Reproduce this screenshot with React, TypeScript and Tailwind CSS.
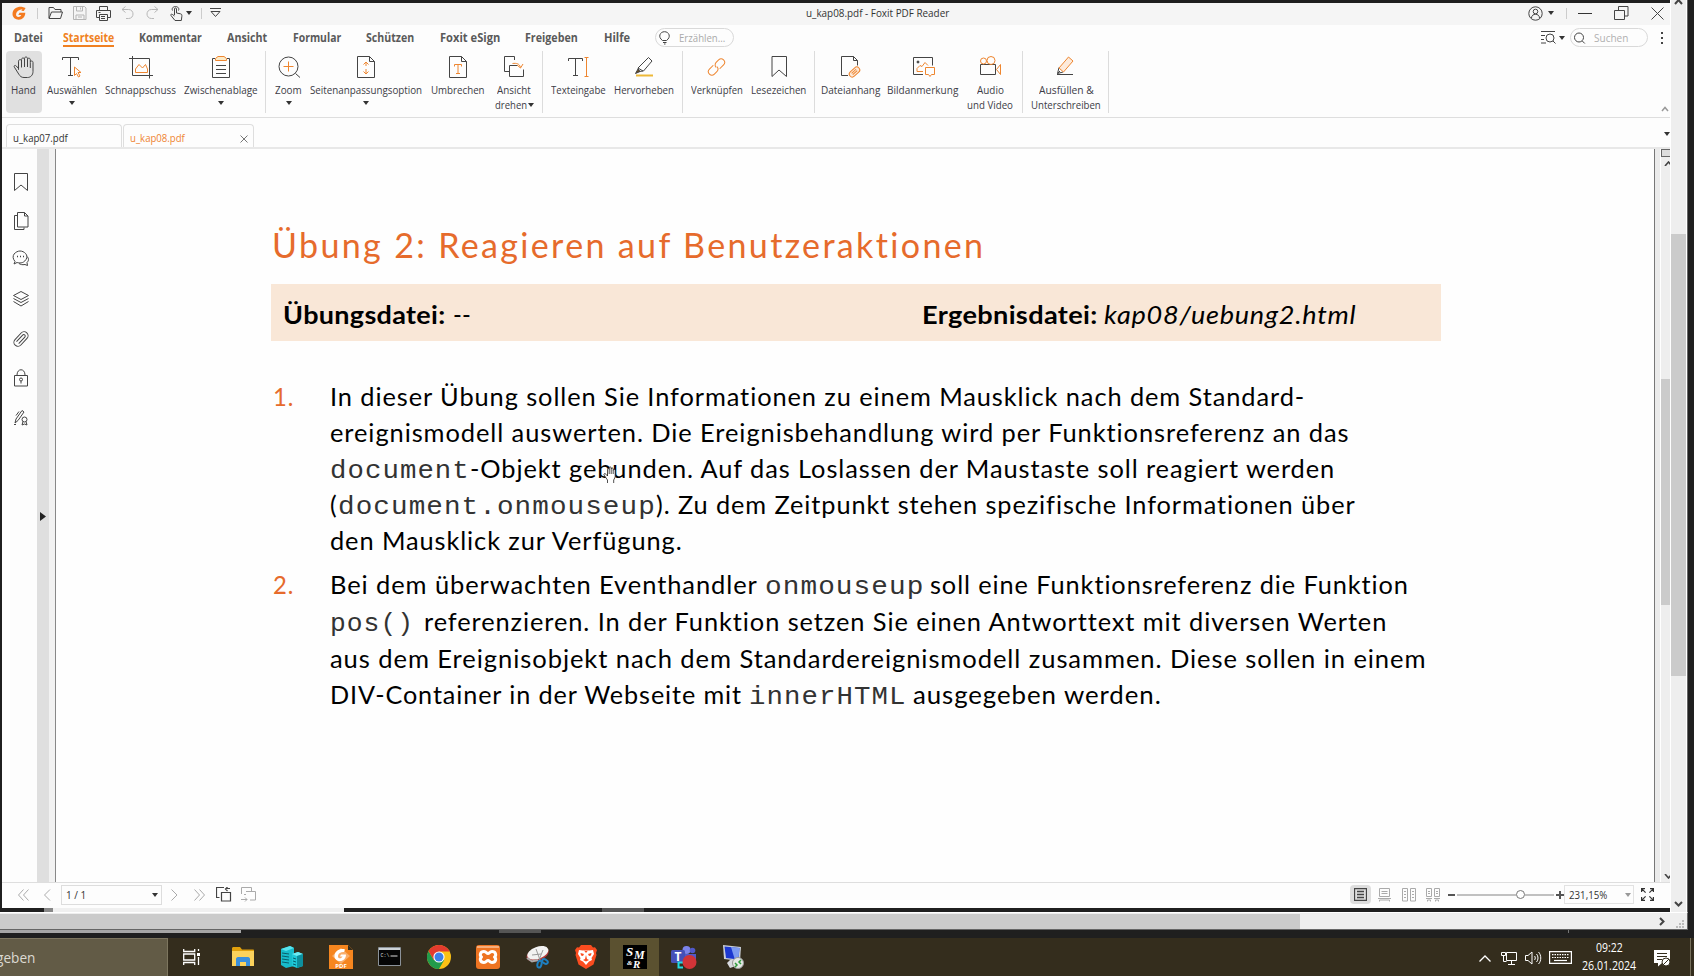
import { useLayoutEffect, useRef, type ReactNode } from "react";

/* Text run squeezed or stretched to the width of its own box. */
function Fit({ className = "", children }: { className?: string; children: ReactNode }) {
  const box = useRef<HTMLSpanElement>(null);
  const run = useRef<HTMLSpanElement>(null);
  useLayoutEffect(() => {
    if (!box.current || !run.current) return;
    const natural = run.current.offsetWidth;
    if (natural > 0) run.current.style.transform = `scaleX(${box.current.clientWidth / natural})`;
  }, []);
  return (
    <span ref={box} className={`block shrink-0 whitespace-nowrap ${className}`}>
      <span ref={run} className="inline-block origin-left whitespace-pre">{children}</span>
    </span>
  );
}

const D = "#444";
const O = "#ee8630";

function Svg({ w = 24, h = 24, className = "", stroke = D, sw = 1, children }: { w?: number; h?: number; className?: string; stroke?: string; sw?: number; children: ReactNode }) {
  return (
    <svg width={w} height={h} viewBox={`0 0 ${w} ${h}`} fill="none" stroke={stroke} strokeWidth={sw} className={`block shrink-0 ${className}`}>
      {children}
    </svg>
  );
}

function Caret({ className = "", color = "#333" }: { className?: string; color?: string }) {
  return (
    <svg width="6" height="4" viewBox="0 0 6 4" className={`block shrink-0 ${className}`}>
      <path d="M0 0h6L3 4z" fill={color} />
    </svg>
  );
}

const HandPath = "M6.5 13.5 4.3 11c-1.2-1.3-2.8-.2-1.9 1.2l4.4 7c1.2 2 2.6 3.3 5.2 3.3h3.5c3.3 0 5.5-2.6 5.5-6V7.500c0-2-2.700-2-2.700 0V13M18.300 7V4.700c0-2-2.800-2-2.800 0V12M15.500 4.700V3.500c0-2-3-2-3 0V12M12.500 4.500c0-2-3-2-3 0v8M9.500 6c0-2-3-1.700-3 .2v8.600";

function TitleBar() {
  return (
    <div className="flex h-[22px] items-center bg-[#f5f5f5] pb-[2px]">
      <Svg w={14} h={14} className="ml-[10px]" stroke="none">
        <path d="M10.500 1C6 .2.500 2.500.500 8c0 3.500 3 5.700 6.200 5.700 3.800 0 6.600-2.700 6.600-6.900H7.500l-1.200 2.300h3c-.5 1.300-1.600 2-2.800 2-1.900 0-2.700-1.400-2.400-3C4.500 5.500 7 3.300 10.500 3.200L9.300 4.800l2.500.1L13.600 2z" fill="#f47b20" />
      </Svg>
      <div className="ml-[11px] h-[11px] w-px bg-[#ccc]" />
      <Svg w={15} h={14} className="ml-[10px]">
        <path d="M1 12V1.500h4.500L7 3.500h6V6M1 12.500 3.500 6H14.500L12.500 12.500H1z" />
      </Svg>
      <Svg w={14} h={14} className="ml-[10px]" stroke="#b5b5b5">
        <path d="M.5.5h11l1.500 1.500v11.500H.500zM3.500.5v4.500h6V.5M7.500 1.500v2M3 13V9h8v4M5 11h4" />
      </Svg>
      <Svg w={15} h={15} className="ml-[9px]">
        <path d="M3.500 4.500v-4h8v4M3.500 11.500h-3v-7h14v7h-3M3.500 8.500h8v6h-8zM2.500 6.500h2M5 10.500h4M5 12.500h4" />
      </Svg>
      <Svg w={13} h={14} className="ml-[10px]" stroke="#b8b8b8">
        <path d="M4.500.5 1 3.500l3.500 3M1 3.500h6.500c6 0 6 9 0 9H5" />
      </Svg>
      <Svg w={13} h={14} className="ml-[12px]" stroke="#b8b8b8">
        <path d="m8.500.5 3.500 3-3.500 3M12 3.500H5.500c-6 0-6 9 0 9H8" />
      </Svg>
      <Svg w={13} h={15} className="ml-[11px]">
        <path d="M4.500 9V3c0-1.500 2-1.500 2 0v4l4 .8c1.500.3 1.500 1.500 1.300 3l-.5 3.700H5L1 9.500c-.7-1.200.8-1.800 1.500-1L4.500 10M2.500 4.500c-1-2 .5-4 3-4s4 2 3 4" />
      </Svg>
      <Caret className="ml-[3px]" />
      <div className="ml-[9px] h-[11px] w-px bg-[#ccc]" />
      <Svg w={12} h={10} className="ml-[8px]">
        <path d="M0 .5h11M1 3.500l4.500 5 4.500-5z" />
      </Svg>
      <Fit className="ml-[584px] w-[143px] text-[11px] leading-[20px] text-[#333]">u_kap08.pdf - Foxit PDF Reader</Fit>
      <Svg w={15} h={15} className="ml-[579px]">
        <circle cx="7.500" cy="7.500" r="6.700" />
        <circle cx="7.500" cy="5.500" r="2.300" />
        <path d="M3.500 12c0-5 8-5 8 0" />
      </Svg>
      <Caret className="ml-[5px]" />
      <div className="ml-[12px] h-[11px] w-px bg-[#ccc]" />
      <div className="ml-[11px] h-px w-[14px] bg-[#333]" />
      <Svg w={15} h={15} className="ml-[22px]">
        <path d="M.5 4.500h10v9H.500zM4.500 4V.5h9.500v9.500h-3" />
      </Svg>
      <Svg w={13} h={13} className="ml-[22px]"><path d="m.5.5 12 12M12.500.5l-12 12" /></Svg>
    </div>
  );
}

function MenuRow() {
  return (
    <div className="flex h-[25px] items-center text-[11.500px] leading-[19px] font-bold text-[#5a5a5a]">
      <Fit className="ml-[12px] w-[29px]">Datei</Fit>
      <div className="mt-[3px] ml-[20px] flex h-[22px] flex-col">
        <Fit className="h-[17px] w-[51px] text-[#f08122]">Startseite</Fit>
        <div className="h-[2px] bg-[#f08122]" />
      </div>
      <Fit className="ml-[25px] w-[63px]">Kommentar</Fit>
      <Fit className="ml-[25px] w-[40px]">Ansicht</Fit>
      <Fit className="ml-[26px] w-[48px]">Formular</Fit>
      <Fit className="ml-[25px] w-[48px]">Schützen</Fit>
      <Fit className="ml-[26px] w-[60px]">Foxit eSign</Fit>
      <Fit className="ml-[25px] w-[53px]">Freigeben</Fit>
      <Fit className="ml-[26px] w-[26px]">Hilfe</Fit>
      <div className="ml-[25px] flex h-[19px] w-[79px] items-center rounded-full border border-[#d9d9d9] font-normal text-[#aaa]">
        <Svg w={12} h={14} className="ml-[3px]">
          <path d="M3.500 9.500C-1.500 6 1 .7 5.500.7S12.500 6 7.500 9.500zM4 11.500h3.500M5 13h1.500" />
        </Svg>
        <Fit className="ml-[8px] w-[46px]">Erzählen...</Fit>
      </div>
      <Svg w={15} h={13} className="ml-[807px]">
        <path d="M0 .5h14M0 4.500h4M0 8.500h3M0 12h5" />
        <circle cx="9" cy="7" r="4" />
        <path d="m12 10 2.500 2.500" />
      </Svg>
      <Caret className="ml-[3px]" />
      <div className="ml-[5px] flex h-[19px] w-[78px] items-center rounded-full border border-[#d9d9d9] font-normal text-[#b0b0b0]">
        <Svg w={12} h={12} className="ml-[3px]"><circle cx="5" cy="5.500" r="4.500" /><path d="m8.300 9 2.500 2.500" /></Svg>
        <Fit className="ml-[8px] w-[34px]">Suchen</Fit>
      </div>
      <div className="ml-[13px] flex flex-col gap-[3px]">
        <i className="size-[2px] bg-[#444]" /><i className="size-[2px] bg-[#444]" /><i className="size-[2px] bg-[#444]" />
      </div>
    </div>
  );
}

function Tool({ className, label, label2, caret, icon }: { className: string; label: ReactNode; label2?: ReactNode; caret?: boolean; icon: ReactNode }) {
  return (
    <div className={`flex h-[62px] shrink-0 flex-col items-center rounded-[4px] pt-[4px] text-[11px] leading-[14px] text-[#3c3c46] ${className}`}>
      <Svg>{icon}</Svg>
      <div className="mt-[4px] h-[15px]">{label}</div>
      {label2}
      {caret && <Caret className="mt-[3px]" />}
    </div>
  );
}

const Sep = ({ className }: { className: string }) => <div className={`h-[62px] w-px shrink-0 bg-[#dcdcdc] ${className}`} />;

const PagePath = "M3.500 1.500h12l5 5v16h-17zM15.500 1.500v5h5";

function Ribbon() {
  return (
    <div className="flex h-[67px] pt-[1px] pl-[4px]">
      <Tool className="w-[36px] bg-[#e0e0e0] pr-[1px]" label={<Fit className="w-[25px]">Hand</Fit>} icon={<path d={HandPath} />} />
      <Tool className="ml-[1px] w-[58px]" caret label={<Fit className="w-[50px]">Auswählen</Fit>} icon={<><path d="M2.500 5V2.500h16V5M10.500 2.500v18M8 20.500h5" /><path d="M14.500 12v8.500l2-2 2 3.500 1.500-1-2-3.500h3z" stroke={O} /></>} />
      <Tool className="w-[79px]" label={<Fit className="w-[71px]">Schnappschuss</Fit>} icon={<><path d="M0 3.500h20.500v20M3.500 1v19.500H24" /><path d="M6.500 17.500V14l3.500-4.500 3.500 3.500 3-3.500 2 4.500v3.500z" stroke={O} /></>} />
      <Tool className="w-[82px]" caret label={<Fit className="w-[74px]">Zwischenablage</Fit>} icon={<><path d="M6 3.500H3.500v19h17v-19H18M7 10.500h10M7 14.500h10M7 18.500h10" /><path d="M6.500 5.500v-2l2.500-2h6l2.500 2v2z" fill="#fdebc8" stroke={O} /></>} />
      <Sep className="ml-[3px]" />
      <Tool className="ml-[5px] w-[35px]" caret label={<Fit className="w-[27px]">Zoom</Fit>} icon={<><circle cx="11.500" cy="11.500" r="9.500" /><path d="m18.500 18.500 4.500 4" /><path d="M6.500 11.500h10M11.500 6.500v10" stroke={O} /></>} />
      <Tool className="w-[120px]" caret label={<Fit className="w-[112px]">Seitenanpassungsoption</Fit>} icon={<><path d={PagePath} /><path d="M12 7v4M12 14v5M9.500 9.500 12 7l2.500 2.500M9.500 16.500 12 19l2.500-2.500" stroke={O} /></>} />
      <Tool className="ml-[1px] w-[62px]" label={<Fit className="w-[54px]">Umbrechen</Fit>} icon={<><path d={PagePath} /><path d="M8.500 11.500v-2h7v2M12 9.500v9M10 18.500h4" stroke={O} /></>} />
      <Tool className="ml-[1px] w-[48px]" label={<Fit className="w-[34px]">Ansicht</Fit>} label2={<div className="flex items-center"><Fit className="w-[32px]">drehen</Fit><Caret className="ml-[1px]" /></div>} icon={<><path d="M7 16.500H2.500v-15h10V5M16 10.500H7.500v11h14v-7" /><path d="M10.500 8.500c4-.5 7 0 8 4M15 10l3.500 3 2.500-4" stroke={O} /></>} />
      <Sep className="ml-[4px]" />
      <Tool className="ml-[4px] w-[63px]" label={<Fit className="w-[55px]">Texteingabe</Fit>} icon={<><path d="M1.500 6V3.500h14V6M8.500 3.500v17M6 20.500h5" /><path d="M17.500 2.500h4M17.500 21.500h4M19.500 2.500v19" stroke={O} /></>} />
      <Tool className="w-[68px]" label={<Fit className="w-[60px]">Hervorheben</Fit>} icon={<><path d="m16.500 2.500 3.500 3.500-8.500 10-4.500.5-1-3.500zM6 13l5 3" /><path d="m6 14-2.500 4.500 4.500-2z" fill="#6b4b20" /><path d="M4 20.500h17" stroke="#edb838" strokeWidth="2" /></>} />
      <Sep className="ml-[4px]" />
      <Tool className="ml-[4px] w-[60px]" label={<Fit className="w-[52px]">Verknüpfen</Fit>} icon={<g stroke={O} transform="translate(11.500 12) rotate(-45)"><path d="M-1-3.500H-6.500a3.500 3.500 0 0 0 0 7H-3a3.500 3.500 0 0 0 3.500-3.500M1 3.500h5.500a3.500 3.500 0 0 0 0-7H3A3.500 3.500 0 0 0-.5 0" /></g>} />
      <Tool className="w-[63px]" label={<Fit className="w-[55px]">Lesezeichen</Fit>} icon={<path d="M5 1.500h14.500v20L12 15l-7 6.500z" />} />
      <Sep className="ml-[4px]" />
      <Tool className="ml-[3px] w-[64px]" label={<Fit className="w-[59px]">Dateianhang</Fit>} icon={<><path d="M10 20.500H3.500v-19h12l4 4v5M15.500 1.500v4h4" /><g transform="translate(16.500 17) rotate(-42)" stroke={O}><rect x="-6" y="-3" width="12" height="6" rx="3" fill="#fdebdc" /><path d="M-3 .7h6M-3-1h6" /></g></>} />
      <Tool className="ml-[1px] w-[79px]" label={<Fit className="w-[71px]">Bildanmerkung</Fit>} icon={<><path d="M12 19.500H2.500v-17h19v8" /><circle cx="7" cy="7" r="1" fill={D} /><path d="M6 16.500v-3l3-3 2 1 3-4 3 3M6 16.500h6M14.500 12.500h9v7h-3l-1.500 2-1.500-2h-3z" stroke={O} /></>} />
      <Tool className="ml-[1px] w-[54px]" label={<Fit className="w-[27px]">Audio</Fit>} label2={<Fit className="w-[46px]">und Video</Fit>} icon={<><path d="M2.500 9.500h15v10h-15z" /><circle cx="5.500" cy="6" r="3" stroke={O} /><circle cx="13" cy="5.500" r="4" stroke={O} /><path d="m18.500 14.500 4-5v10z" stroke={O} /></>} />
      <Sep className="ml-[5px]" />
      <Tool className="ml-[4px] w-[78px]" label={<Fit className="w-[55px]">Ausfüllen &amp;</Fit>} label2={<Fit className="w-[70px]">Unterschreiben</Fit>} icon={<><path d="M5 12.500 3.500 18.500 9 17M3 19.500h16M3.500 18.500 6 16" /><path d="m14.500 2 4.500 4-9.500 11-4.500-4z" fill="#fdebdc" stroke={O} /></>} />
      <Sep className="ml-[3px]" />
      <Svg w={8} h={6} className="mt-[55px] ml-[552px]" stroke="#999" sw={1.5}><path d="m1 5 3-3.500L7 5" /></Svg>
    </div>
  );
}

function TabStrip() {
  return (
    <div className="flex h-[32px] items-end border-t border-b-2 border-t-[#dedede] border-b-[#e8e8e8] pl-[4px] text-[11px] leading-[22px]">
      <div className="flex h-[23px] w-[116px] rounded-t-[4px] border border-b-0 border-[#dedede] pt-[2px] pl-[6px] text-[#333]">
        <Fit className="w-[55px]">u_kap07.pdf</Fit>
      </div>
      <div className="ml-[1px] flex h-[23px] w-[131px] rounded-t-[4px] border border-b-0 border-[#dedede] pt-[2px] pl-[6px] text-[#ef8433]">
        <Fit className="w-[55px]">u_kap08.pdf</Fit>
        <Svg w={8} h={8} className="mt-[8px] ml-[55px]" stroke="#777"><path d="m.5.5 7 7M7.500.5l-7 7" /></Svg>
      </div>
      <Caret className="mb-[11px] ml-[1410px]" />
    </div>
  );
}

function SideBar() {
  return (
    <div className="flex w-[35px] shrink-0 flex-col items-center pt-[23px] pl-[3px]">
      <Svg w={18} h={20}><path d="M2.500 1.500h13v17L9 13l-6.500 5.500z" /></Svg>
      <Svg w={18} h={20} className="mt-[19px]"><path d="M5.500 1.500h7l3.500 3.500v11H5.500zM12.500 1.500V5H16M5.500 4.500H2.500v14h9.500v-2" /></Svg>
      <Svg w={18} h={18} className="mt-[19px]"><path d="M3 11.500c-5-6 1-10.500 5-10.500s9 4 6 8.500-7 3.500-9 3l-3 1.500zM15 6.500c2 2 2 4 0 6l.5 3-2.500-1c-3 .5-4.500 0-6-1" /><path d="M5 6.500h1M8 6.500h1M11 6.500h1" strokeWidth="1.500" /></Svg>
      <Svg w={18} h={18} className="mt-[22px]"><path d="m9 1.500 7.500 4L9 9.500l-7.500-4zM1.500 8.500l7.500 4 7.500-4M1.500 11.500 9 16l7.500-4.500" /></Svg>
      <Svg w={18} h={18} className="mt-[22px]"><g transform="translate(9 9) rotate(-47)"><rect x="-8.500" y="-4" width="17" height="8" rx="4" /><path d="M-5 1.500H4a1.500 1.500 0 0 0 0-3h-9" /></g></Svg>
      <Svg w={18} h={20} className="mt-[20px]"><path d="M2.500 7.500h13v10.500h-13zM5 7C5 0 13 0 13 7" /><circle cx="9" cy="11.500" r="1.500" /><path d="M9 13v2.500" /></Svg>
      <Svg w={18} h={18} className="mt-[21px]"><path d="m3 14 1-4 6-8.500 2 1.500-6 8.500zM7 2.500l-3 4" /><circle cx="12.500" cy="10.500" r="2.500" /><path d="M11 12.500 10 16l2.500-1 2.500 1-1-3.500M2 15.500h2" /></Svg>
    </div>
  );
}

const line = "flex h-[36px] items-baseline";
const mono = "font-['Liberation_Mono',monospace] text-[26px] tracking-[1px] text-[#333]";

function DocumentPage() {
  return (
    <div className="relative w-[1598px] shrink-0 bg-[#fefefe] pt-[65px] pl-[215px] font-[Lato,sans-serif] tracking-[0.9px] text-black [font-variant-ligatures:none]">
      <Fit className="ml-[1px] h-[70px] w-[713px] text-[35px] leading-[60px] tracking-[2.400px] text-[#e66b2c]">Übung 2: Reagieren auf Benutzeraktionen</Fit>
      <div className="flex h-[57px] w-[1170px] items-baseline bg-[#f9e7d7] pt-[8px] pl-[12px] text-[25px] leading-[44px] tracking-[0.300px]">
        <Fit className="w-[163px] font-bold">Übungsdatei:</Fit>
        <Fit className="ml-[7px] w-[18px]">--</Fit>
        <Fit className="ml-[451px] w-[175px] font-bold">Ergebnisdatei:</Fit>
        <Fit className="ml-[7px] w-[252px] tracking-[0.700px] italic">kap08/uebung2.html</Fit>
      </div>
      <div className="mt-[37px] flex text-[25px] leading-[36px]">
        <Fit className="ml-[2px] w-[21px] text-[#e66b2c]">1.</Fit>
        <div className="ml-[36px]">
          <div className={line}><Fit className="w-[975px]">In dieser Übung sollen Sie Informationen zu einem Mausklick nach dem Standard-</Fit></div>
          <div className={line}><Fit className="w-[1019px]">ereignismodell auswerten. Die Ereignisbehandlung wird per Funktionsreferenz an das</Fit></div>
          <div className={line}>
            <Fit className={`w-[140px] ${mono}`}>document</Fit>
            <Fit className="w-[865px]">-Objekt gebunden. Auf das Loslassen der Maustaste soll reagiert werden</Fit>
          </div>
          <div className={line}>
            <Fit className="w-[8px]">(</Fit>
            <Fit className={`w-[318px] ${mono}`}>document.onmouseup</Fit>
            <Fit className="w-[700px]">). Zu dem Zeitpunkt stehen spezifische Informationen über</Fit>
          </div>
          <div className={line}><Fit className="w-[353px]">den Mausklick zur Verfügung.</Fit></div>
        </div>
      </div>
      <div className="mt-[8px] flex text-[25px] leading-[36px]">
        <Fit className="ml-[2px] w-[21px] text-[#e66b2c]">2.</Fit>
        <div className="ml-[36px]">
          <div className={line}>
            <Fit className="w-[428px]">Bei dem überwachten Eventhandler</Fit>
            <Fit className={`ml-[7px] w-[159px] ${mono}`}>onmouseup</Fit>
            <Fit className="ml-[6px] w-[479px]">soll eine Funktionsreferenz die Funktion</Fit>
          </div>
          <div className={`${line} mt-[1px]`}>
            <Fit className={`w-[84px] ${mono}`}>pos()</Fit>
            <Fit className="ml-[10px] w-[963px]">referenzieren. In der Funktion setzen Sie einen Antworttext mit diversen Werten</Fit>
          </div>
          <div className={`${line} mt-[1px]`}><Fit className="w-[1096px]">aus dem Ereignisobjekt nach dem Standardereignismodell zusammen. Diese sollen in einem</Fit></div>
          <div className={line}>
            <Fit className="w-[412px]">DIV-Container in der Webseite mit</Fit>
            <Fit className={`ml-[7px] w-[157px] ${mono}`}>innerHTML</Fit>
            <Fit className="ml-[7px] w-[249px]">ausgegeben werden.</Fit>
          </div>
        </div>
      </div>
      <Svg w={15} h={18} className="absolute top-[317px] left-[547px]" stroke="#222">
        <path d="M4.500 17v-3L1 9c-.5-1.500 1-2 2-.7L4.500 10V3.500c0-1.500 1.700-1.500 1.700 0V2c0-1.500 2-1.500 2 0v1c0-1.500 2-1.500 2 0v1.500c0-1.500 2-1.500 2 0V11l-1.500 3v3" fill="#fff" strokeWidth=".8" />
        <path d="M6.200 3.500V8M8.200 3v5M10.200 4.500V8" strokeWidth=".8" />
      </Svg>
    </div>
  );
}

function StatusBar() {
  const g = "#aaa";
  return (
    <div className="flex h-[26px] items-center border-t border-[#dedede] pb-[2px] text-[11px] leading-[18px] text-[#333]">
      <Svg w={11} h={12} className="ml-[16px]" stroke={g}><path d="M5.500.5.500 6l5 5.500M10.500.5l-5 5.500 5 5.500" /></Svg>
      <Svg w={7} h={12} className="ml-[15px]" stroke={g}><path d="M6 .5.500 6 6 11.500" /></Svg>
      <div className="ml-[10px] flex h-[20px] w-[101px] items-center border border-[#ddd] pl-[4px]">
        <Fit className="w-[20px]">1 / 1</Fit><Caret className="ml-[66px]" />
      </div>
      <Svg w={7} h={12} className="ml-[9px]" stroke={g}><path d="M.5.5 6 6 .5 11.500" /></Svg>
      <Svg w={11} h={12} className="ml-[16px]" stroke={g}><path d="m.5.5 5 5.500-5 5.500M5.500.5l5 5.500-5 5.500" /></Svg>
      <Svg w={16} h={15} className="ml-[11px]"><path d="M5.500 5.500h9v8.500h-9zM3.500 10.500H.500V.5H8M14 1.500h-4M11.500 0 9.500 2l2 2" strokeWidth="1.200" /></Svg>
      <Svg w={16} h={15} className="ml-[9px]" stroke={g}><path d="M.5 7V.5h10v4M5 4.500h9.500v8.500H9M3 7.500h2M0 12.500h6M4 10.500l2 2-2 2" /></Svg>
      <div className="ml-[1093px] flex h-[19px] w-[21px] items-center justify-center rounded-[4px] bg-[#dedede]">
        <Svg w={13} h={13}><path d="M.5.500h12v12H.500zM3 3.500h7M3 6.500h7M3 9.500h7" strokeWidth="1.300" /></Svg>
      </div>
      <Svg w={13} h={14} className="ml-[7px]" stroke={g}><path d="M1.500.5h10v8h-10zM3.500 3.500h6M3.500 5.500h6M0 10.500h13M1.500 13.500v-1.500h10v1.500" /></Svg>
      <Svg w={14} h={14} className="ml-[11px]" stroke={g}><path d="M.5.500h5v12.500h-5zM8.500.5h5v12.500h-5zM2 3.500h2M2 6.500h2M2 9.500h2M10 3.500h2M10 6.500h2M10 9.500h2" /></Svg>
      <Svg w={14} h={14} className="ml-[10px]" stroke={g}><path d="M.5.5h5v8h-5zM8.500.5h5v8h-5zM2 3.500h2M2 5.500h2M10 3.500h2M10 5.500h2M0 10.500h6M8 10.500h6M1.500 13.500v-1.500h3v1.500M9.500 13.500v-1.500h3v1.500" /></Svg>
      <div className="ml-[8px] h-[2px] w-[7px] bg-[#555]" />
      <div className="ml-[2px] flex w-[97px] items-center">
        <div className="h-[2px] w-[59px] bg-[#c0c0c0]" />
        <div className="size-[9px] rounded-full border border-[#777] bg-white" />
        <div className="h-[2px] w-[29px] bg-[#c0c0c0]" />
      </div>
      <Svg w={8} h={8} className="ml-[2px]" stroke="#555" sw={2}><path d="M0 4h8M4 0v8" /></Svg>
      <div className="flex h-[19px] w-[70px] items-center border border-[#e2e2e2] pl-[4px]">
        <Fit className="w-[38px]">231,15%</Fit><Caret className="ml-[18px]" color="#999" />
      </div>
      <Svg w={13} h={13} className="ml-[7px]" stroke="#333" sw={1.2}><path d="M.6 4V.600h3.400M.6.6l4 4M9 .6h3.400V4M12.400.6l-4 4M.6 9v3.400H4M.6 12.400l4-4M12.400 9v3.400H9M12.400 12.400l-4-4" /></Svg>
    </div>
  );
}

function AppWindow() {
  return (
    <div className="ml-[2px] flex h-[905px] w-[1668px] flex-col overflow-hidden bg-[#fdfdfd]">
      <TitleBar />
      <MenuRow />
      <Ribbon />
      <TabStrip />
      <div className="flex h-[733px] shrink-0">
        <SideBar />
        <div className="flex w-[12px] shrink-0 items-start bg-[#dfdfdf] pt-[363px] pl-[3px]">
          <svg width="6" height="9" viewBox="0 0 6 9"><path d="M0 0v9l6-4.500z" fill="#222" /></svg>
        </div>
        <div className="w-[7px] shrink-0 border-r border-[#888] bg-[#f2f2f2]" />
        <DocumentPage />
        <div className="w-[7px] shrink-0 border-r border-l border-r-white border-l-[#777] bg-[#ebebeb]" />
        <div className="flex w-[9px] flex-col items-end bg-[#eee]">
          <div className="h-[8px] w-full border border-r-0 border-[#666] bg-[#ddd]" />
          <Svg w={6} h={5} className="mt-[4px]" sw={1.6}><path d="m1 5 3.500-4L8 5" /></Svg>
          <div className="mt-[213px] h-[226px] w-full bg-[#cbcbcb]" />
          <Svg w={6} h={5} className="mt-auto mb-[3px]" sw={1.6}><path d="m1 0 3.500 4L8 0" /></Svg>
        </div>
      </div>
      <StatusBar />
    </div>
  );
}

const Slot = ({ className = "", children }: { className?: string; children: ReactNode }) => (
  <div className={`flex h-[38px] w-[49px] shrink-0 items-center justify-center ${className}`}>{children}</div>
);

function TaskBar() {
  return (
    <div className="flex h-[38px] overflow-hidden bg-[#342d1d] text-white">
      <div className="flex w-[168px] shrink-0 items-center border-t border-r border-[#7d765f] bg-[#625b46] text-[14px] text-[#dcdad2]">
        <Fit className="ml-[-4px] w-[39px]">geben</Fit>
      </div>
      <Slot className="ml-[-1px]">
        <Svg w={17} h={16} stroke="#fff" sw={1.3}><path d="M.7 0v2.500h11V0M.7 5h11v6H.7zM.7 16v-2.500h11V16M15.500 0v2M15.500 8v8" /><path d="M14 4h3v3h-3z" fill="#fff" stroke="none" /></Svg>
      </Slot>
      <Slot className="ml-[2px]">
        <Svg w={22} h={20} stroke="none"><path d="M0 1.500C0 .8.500 0 1.200 0H8l2 2.500h11c.6 0 1 .4 1 1V6H0z" fill="#e0a00c" /><path d="M0 4h22v15H0z" fill="#fbd25c" /><path d="M4 19v-7c0-1 .8-2 2-2h10c1.200 0 2 1 2 2v7h-4v-4H8v4z" fill="#3a8fdc" /></Svg>
      </Slot>
      <Slot>
        <Svg w={24} h={24} stroke="none"><path d="m1 4 9-3 4 2v18l-8 2-5-3z" fill="#18bccb" /><path d="m1 4 9-3 4 2-8 3z" fill="#57e4ee" /><path d="m12 9 6-2 5 2v12l-6 2-5-2z" fill="#1fc8d8" /><path d="m12 9 6-2 5 2-6 2z" fill="#6deaf2" /><path d="m17 11 6-2v12l-6 2z" fill="#0d8f9e" /><path d="M2 8l7 1M2 11l7 1M2 14l7 1M2 17l7 1M13 13l3 1M13 16l3 1M13 19l3 1" stroke="#075f6c" /></Svg>
      </Slot>
      <Slot>
        <svg width="24" height="24" viewBox="0 0 24 24">
          <path d="M0 0h19l5 5v19H0z" fill="#f6861f" /><path d="M19 0v5h5z" fill="#342d1d" /><path d="m12 3 9 8-9 8-9-8z" fill="#f9ad69" />
          <path d="M16 4.500c-4.500-1.500-10 1-10.500 6C5 14 8 16 11 16c3.500 0 6-2.500 6-6.500h-5l-1 2h2.500c-1.200 2.700-5 2.300-4.500-.8C9.500 8 12 6.800 15 7z" fill="#fff" />
          <text x="12" y="22.500" fill="#fff" fontSize="6" fontWeight="700" textAnchor="middle" fontFamily="Open Sans, sans-serif">PDF</text>
        </svg>
      </Slot>
      <Slot>
        <svg width="24" height="20" viewBox="0 0 24 20">
          <path d="M.5.5h22v18H.500z" fill="#050505" stroke="#8b9299" /><path d="M1 1h21v2H1z" fill="#cdd3d8" />
          <text x="2.500" y="9.500" fill="#ddd" fontSize="5" fontFamily="Liberation Mono, monospace">C:\</text><path d="M12.500 9h7" stroke="#ddd" />
        </svg>
      </Slot>
      <Slot>
        <Svg w={24} h={24} stroke="none"><circle cx="12" cy="12" r="12" fill="#fbc116" /><path d="M1.600 6A12 12 0 0 0 12 24l5.200-9L12 12 6.800 15z" fill="#229a4b" /><path d="M12 6.500h10.700L22.400 6A12 12 0 0 0 1.600 6l5.200 9z" fill="#e33b2e" /><circle cx="12" cy="12" r="5.600" fill="#fff" /><circle cx="12" cy="12" r="4.500" fill="#3d7fe8" /></Svg>
      </Slot>
      <Slot>
        <Svg w={24} h={24} stroke="none"><rect width="24" height="24" rx="3" fill="#ee7422" /><path d="M1 1h22v2H1z" fill="#f7ad7a" /><path d="M8 6.500c-4 0-4.500 4-2.500 5.500-2 1.500-1.500 5.500 2.500 5.500 2.500 0 2.500-2 4-2s1.500 2 4 2c4 0 4.500-4 2.500-5.500 2-1.500 1.500-5.500-2.500-5.500-2.500 0-2.500 2-4 2s-1.500-2-4-2z" stroke="#fff" strokeWidth="3" strokeLinejoin="round" /></Svg>
      </Slot>
      <Slot>
        <Svg w={24} h={24} stroke="none"><ellipse cx="12.500" cy="9.500" rx="11.500" ry="6.500" transform="rotate(-20 12 9)" fill="#b23a3a" /><ellipse cx="12.500" cy="8" rx="11" ry="6" transform="rotate(-20 12 7)" fill="#f2f2f2" /><path d="m2 13 5 3.500 6-1.500" stroke="#aaa" strokeWidth="2" /><path d="M11 4l4 11M18 5l-4 10M7 10l9-1" stroke="#999" /><ellipse cx="14.500" cy="19" rx="2" ry="3.500" stroke="#1e7fc0" strokeWidth="2" transform="rotate(15 14 19)" /><ellipse cx="20" cy="16.500" rx="2" ry="3" stroke="#1e7fc0" strokeWidth="2" transform="rotate(-60 20 16.500)" /></Svg>
      </Slot>
      <Slot>
        <Svg w={22} h={24} stroke="none"><path d="M6 0h10l2 2.500 2-.3L22 5l-1 3 .5 2-3 9.500L11 24l-7.500-4.500L.5 10 1 8 0 5l2-2.800 2 .3z" fill="#fb4c1f" /><path d="m4 5 4 .5L11 5l3 .5 4-.5 1 4-2.500 4 .5 2-3 1.500L11 20l-3-3.500L5 15l.5-2L3 9z" fill="#fff" /><path d="m5.500 8 3.500 1-1 2-2-.5zM16.500 8 13 9l1 2 2-.5zM11 10l1 4 2 1-3 1.500L8 15l2-1zM9 5.500h4L11 8z" fill="#fb4c1f" /></Svg>
      </Slot>
      <Slot className="bg-[#5b5130]">
        <svg width="24" height="24" viewBox="0 0 24 24" fontFamily="Liberation Serif, serif" fontWeight="700" fontStyle="italic" fill="#fff">
          <path d="M0 0h24v24H0z" fill="#000" />
          <text x="3" y="10.500" fontSize="13">S</text><text x="11" y="14" fontSize="12">M</text><text x="4" y="20" fontSize="7">&amp;</text><text x="10" y="23" fontSize="11">R</text>
        </svg>
      </Slot>
      <Slot>
        <svg width="26" height="24" viewBox="0 0 26 24">
          <circle cx="15.500" cy="5" r="4" fill="#7b83eb" /><circle cx="21.500" cy="5.500" r="2.800" fill="#5059c9" /><path d="M10 9h15v9H10z" fill="#5059c9" /><rect y="5" width="14" height="13" rx="1.500" fill="#4650b8" />
          <text x="7" y="15.500" fontSize="12" fontWeight="700" textAnchor="middle" fill="#fff" fontFamily="Open Sans, sans-serif">T</text>
          <path d="M12 17.500H7.500v5H12" fill="none" stroke="#22dce4" strokeWidth="2" /><circle cx="18.500" cy="17" r="7" fill="#d13438" />
        </svg>
      </Slot>
      <Slot>
        <Svg w={24} h={24} stroke="none"><path d="m2 0 18 2-1 14-16-2z" fill="#c9ced6" /><path d="m3.500 1.500 15 1.500-1 11.500L5 13z" fill="#1c38d0" /><path d="m10 2 8.500 1-1 11-4-.5z" fill="#7c9af0" /><path d="M6 18l3-3h5l1 6-6 2z" fill="#d8dadf" /><circle cx="17" cy="18" r="5.500" fill="#e4e8e4" stroke="#999" /><path d="m14 18 2 2-2 2M20 15l-2 2 2 2" stroke="#2e9b3c" strokeWidth="1.500" /></Svg>
      </Slot>
      <Svg w={12} h={7} className="mt-[17px] ml-[722px]" stroke="#fff" sw={1.3}><path d="m.5 6.500 5.500-5.500 5.500 5.500" /></Svg>
      <Svg w={17} h={15} className="mt-[13px] ml-[10px]" stroke="#fff"><path d="M5.500 1.500h10v8h-10zM10.500 9.500v4M7 13.500h7M.5 1.500h4v3h-4zM2.500 4.500v6h3" /></Svg>
      <Svg w={17} h={14} className="mt-[13px] ml-[7px]" stroke="#fff"><path d="M.5 4.500H3l4-3.500v12L3 9.500H.500zM9.500 5c1 1 1 3 0 4M11.500 3c2 2 2 6 0 8M13.500 1c3 3 3 9 0 12" /></Svg>
      <Svg w={23} h={13} className="mt-[13px] ml-[7px]" stroke="#fff" sw={1.2}><path d="M.6.6h21.800v11.800H.6z" /><path d="M3 3.700h17M3 6.500h17" strokeDasharray="1.500 1" /><path d="M5 9.500h13" /></Svg>
      <div className="ml-[10px] flex w-[54px] flex-col items-center pt-[1px] text-[12px] leading-[18px]">
        <Fit className="w-[27px]">09:22</Fit>
        <Fit className="w-[54px]">26.01.2024</Fit>
      </div>
      <Svg w={17} h={17} className="mt-[12px] ml-[18px]" stroke="none"><path d="M0 0h16v13H8l-4 3.500V13H0z" fill="#fff" /><path d="M3 3.500h10M3 6.500h10M3 9.500h5" stroke="#342d1d" /><circle cx="12" cy="12" r="4" fill="#fff" stroke="#342d1d" /><path d="m9 15 6-6" stroke="#342d1d" /></Svg>
      <div className="ml-[19px] w-px bg-[#77705c]" />
    </div>
  );
}

export default function App() {
  return (
    <div className="flex h-[976px] w-[1694px] flex-col overflow-hidden bg-[#1f1f1f] font-['Open_Sans',sans-serif]">
      <div className="flex h-[912px] shrink-0">
        <div className="flex w-[1670px] shrink-0 flex-col">
          <div className="h-[3px]" />
          <AppWindow />
          <div className="flex h-[4px]">
            <div className="ml-[44px] w-[9px] bg-[#888]" />
            <div className="w-[291px] bg-[#f0f0f0]" />
            <div className="ml-[258px] w-[42px] bg-[#555]" />
          </div>
        </div>
        <div className="flex w-[17px] shrink-0 flex-col items-center border-x border-white bg-[#eee]">
          <Svg w={9} h={5} sw={2}><path d="m1 4 3.500-4L8 4" /></Svg>
          <div className="mt-[229px] h-[442px] w-full bg-[#cbcbcb]" />
          <Svg w={9} h={6} className="mt-auto mb-[5px]" sw={2}><path d="m1 1 3.500 3.500L8 1" /></Svg>
        </div>
        <div className="w-px bg-[#666]" />
      </div>
      <div className="flex h-[18px] w-[1688px] shrink-0 items-center border-t border-r border-b border-t-white border-r-[#666] border-b-[#666] bg-[#eee]">
        <div className="h-[15px] w-[1300px] bg-[#cbcbcb]" />
        <Svg w={6} h={9} className="ml-[359px]" sw={2}><path d="m1 1 3.500 3.500L1 8" /></Svg>
        <Svg w={8} h={8} className="mt-[6px] ml-[11px]" stroke="none"><path d="M6 0h2v2H6zM6 3h2v2H6zM3 3h2v2H3zM0 6h2v2H0zM3 6h2v2H3zM6 6h2v2H6z" fill="#bbb" /></Svg>
      </div>
      <div className="flex h-[8px] shrink-0">
        <div className="h-[3px] w-[241px] bg-[#a6a6a6]" />
        <div className="ml-[258px] h-[3px] w-[42px] bg-[#555]" />
        <div className="ml-[1027px] h-[3px] w-px bg-[#777]" />
      </div>
      <TaskBar />
    </div>
  );
}
